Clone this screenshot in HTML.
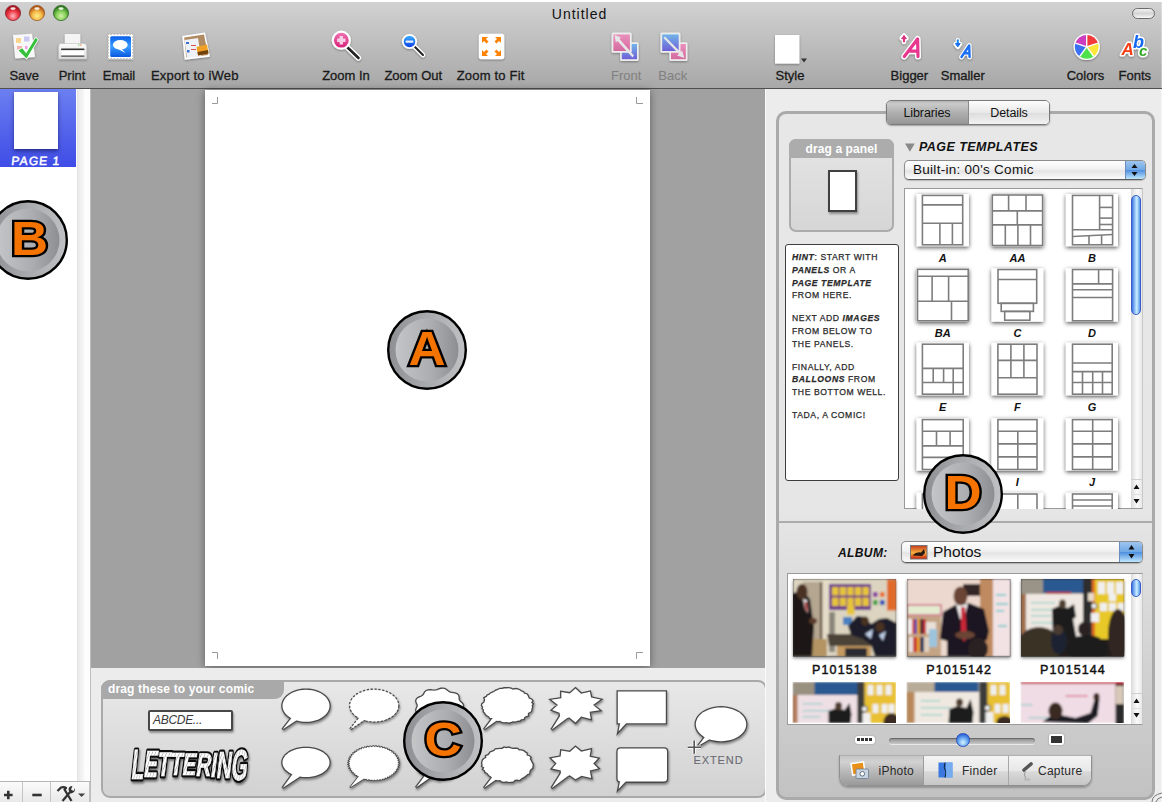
<!DOCTYPE html>
<html><head><meta charset="utf-8">
<style>
*{box-sizing:border-box;margin:0;padding:0}
html,body{width:1162px;height:802px;overflow:hidden;background:#fff;font-family:"Liberation Sans",sans-serif;position:relative}
.a{position:absolute}
.lbl{position:absolute;width:200px;text-align:center;font-size:13px;line-height:15px;color:#1a1a1a;white-space:nowrap;-webkit-text-stroke:0.3px currentColor}
#tb{left:0;top:2px;width:1162px;height:87px;background:linear-gradient(#d2d2d2,#a7a7a7)}
#tbline{left:0;top:88px;width:1162px;height:1px;background:#4f4f4f}
</style></head><body>
<!-- toolbar -->
<div id="tb" class="a"></div>
<div id="tbline" class="a"></div>
<svg class="a" style="left:0;top:0" width="1162" height="89" viewBox="0 0 1162 89">
<defs>
<radialGradient id="gRed" cx="50%" cy="70%" r="60%"><stop offset="0" stop-color="#ffb9c0"/><stop offset=".55" stop-color="#ef3d4a"/><stop offset="1" stop-color="#a8141f"/></radialGradient>
<radialGradient id="gOr" cx="50%" cy="70%" r="60%"><stop offset="0" stop-color="#fdf08a"/><stop offset=".55" stop-color="#f3b545"/><stop offset="1" stop-color="#b0551a"/></radialGradient>
<radialGradient id="gGr" cx="50%" cy="70%" r="60%"><stop offset="0" stop-color="#d5f2a8"/><stop offset=".55" stop-color="#80cc55"/><stop offset="1" stop-color="#2f7a1f"/></radialGradient>
<linearGradient id="gPill" x1="0" y1="0" x2="0" y2="1"><stop offset="0" stop-color="#f4f4f4"/><stop offset=".5" stop-color="#d4d4d4"/><stop offset="1" stop-color="#fafafa"/></linearGradient>
<linearGradient id="gPink" x1="0" y1="0" x2="0" y2="1"><stop offset="0" stop-color="#f070b0"/><stop offset="1" stop-color="#d8207a"/></linearGradient>
<linearGradient id="gBlue" x1="0" y1="0" x2="0" y2="1"><stop offset="0" stop-color="#3cb0ff"/><stop offset="1" stop-color="#0a3ee8"/></linearGradient>
<linearGradient id="gStamp" x1="0" y1="0" x2="0" y2="1"><stop offset="0" stop-color="#0a5ee8"/><stop offset=".5" stop-color="#3a9cff"/><stop offset="1" stop-color="#0a58e0"/></linearGradient>
<linearGradient id="gFP" x1="0" y1="0" x2="0" y2="1"><stop offset="0" stop-color="#ea90bd"/><stop offset="1" stop-color="#d46a9f"/></linearGradient>
<linearGradient id="gFB" x1="0" y1="0" x2="0" y2="1"><stop offset="0" stop-color="#72b4ea"/><stop offset="1" stop-color="#6e5fd6"/></linearGradient>
<linearGradient id="gPrint" x1="0" y1="0" x2="0" y2="1"><stop offset="0" stop-color="#fbfbfb"/><stop offset="1" stop-color="#dcdcdc"/></linearGradient>
<filter id="sh" x="-30%" y="-30%" width="160%" height="160%"><feDropShadow dx="0" dy="1" stdDeviation="0.8" flood-opacity="0.35"/></filter>
</defs>
<!-- traffic lights -->
<circle cx="13" cy="13" r="7.6" fill="url(#gRed)" stroke="#8a2a30" stroke-width="0.8"/>
<ellipse cx="13" cy="8.6" rx="2.6" ry="1.4" fill="#fff" opacity=".85"/>
<circle cx="37" cy="13" r="7.6" fill="url(#gOr)" stroke="#9a5a22" stroke-width="0.8"/>
<ellipse cx="37" cy="8.6" rx="2.6" ry="1.4" fill="#fff" opacity=".85"/>
<circle cx="61" cy="13" r="7.6" fill="url(#gGr)" stroke="#2e6a25" stroke-width="0.8"/>
<ellipse cx="61" cy="8.6" rx="2.6" ry="1.4" fill="#fff" opacity=".85"/>
<!-- pill -->
<rect x="1132.5" y="8.5" width="22" height="10" rx="5" fill="url(#gPill)" stroke="#6a6a6a" stroke-width="1"/>

<!-- Save -->
<g filter="url(#sh)">
<polygon points="13,35 32,33.8 35,57 15.2,58.5" fill="#f8f8f8"/>
<rect x="16" y="38" width="5" height="5" fill="#fcd58c"/>
<rect x="24" y="36.5" width="5.5" height="5" fill="#c9c9f2"/>
<rect x="17" y="46" width="5" height="3.5" fill="#f5b0b0"/>
<rect x="25" y="46" width="2.5" height="3" fill="#f0a0e8"/>
<path d="M18.6,50.6 L22.2,48.3 L26.2,53.2 L35.6,37.8 L37.8,39.7 L26.5,58.5Z" fill="#36c23a" stroke="#fff" stroke-width="1.6" stroke-linejoin="round" paint-order="stroke"/>
</g>
<!-- Print -->
<g filter="url(#sh)">
<rect x="64.8" y="34" width="15.5" height="10" fill="#f4f4f4"/>
<path d="M61,43.5 H84 Q86.8,43.5 86.8,47 V59 H58.6 V47 Q58.6,43.5 61,43.5Z" fill="url(#gPrint)" stroke="#bdbdbd" stroke-width=".6"/>
<rect x="61" y="48.6" width="23.5" height="1.6" rx=".8" fill="#333"/>
<path d="M61.5,50.4 H84 V55.6 H61.5Z" fill="#fff"/>
<rect x="61" y="55.4" width="23.5" height="1.4" rx=".7" fill="#444"/>
<rect x="78" y="44.5" width="1.5" height="1" fill="#6c6"/><rect x="80" y="44.5" width="1.5" height="1" fill="#e74"/>
</g>
<!-- Email stamp -->
<g filter="url(#sh)">
<rect x="108" y="34" width="25.2" height="25.2" fill="#fff"/>
<rect x="110.2" y="36.2" width="20.8" height="20.8" rx="1.5" fill="url(#gStamp)"/>
<ellipse cx="120.3" cy="44.8" rx="7.4" ry="4.8" fill="#fff"/>
<path d="M121,48.5 L125.5,53 L118.5,49.2Z" fill="#fff"/>
</g>
<g fill="#bdbdbd"><circle cx="108.00" cy="34" r="1.1"/><circle cx="108.00" cy="59.2" r="1.1"/><circle cx="108" cy="34.00" r="1.1"/><circle cx="133.2" cy="34.00" r="1.1"/><circle cx="111.15" cy="34" r="1.1"/><circle cx="111.15" cy="59.2" r="1.1"/><circle cx="108" cy="37.15" r="1.1"/><circle cx="133.2" cy="37.15" r="1.1"/><circle cx="114.30" cy="34" r="1.1"/><circle cx="114.30" cy="59.2" r="1.1"/><circle cx="108" cy="40.30" r="1.1"/><circle cx="133.2" cy="40.30" r="1.1"/><circle cx="117.45" cy="34" r="1.1"/><circle cx="117.45" cy="59.2" r="1.1"/><circle cx="108" cy="43.45" r="1.1"/><circle cx="133.2" cy="43.45" r="1.1"/><circle cx="120.60" cy="34" r="1.1"/><circle cx="120.60" cy="59.2" r="1.1"/><circle cx="108" cy="46.60" r="1.1"/><circle cx="133.2" cy="46.60" r="1.1"/><circle cx="123.75" cy="34" r="1.1"/><circle cx="123.75" cy="59.2" r="1.1"/><circle cx="108" cy="49.75" r="1.1"/><circle cx="133.2" cy="49.75" r="1.1"/><circle cx="126.90" cy="34" r="1.1"/><circle cx="126.90" cy="59.2" r="1.1"/><circle cx="108" cy="52.90" r="1.1"/><circle cx="133.2" cy="52.90" r="1.1"/><circle cx="130.05" cy="34" r="1.1"/><circle cx="130.05" cy="59.2" r="1.1"/><circle cx="108" cy="56.05" r="1.1"/><circle cx="133.2" cy="56.05" r="1.1"/><circle cx="133.20" cy="34" r="1.1"/><circle cx="133.20" cy="59.2" r="1.1"/><circle cx="108" cy="59.20" r="1.1"/><circle cx="133.2" cy="59.20" r="1.1"/></g>
<!-- iWeb -->
<g filter="url(#sh)">
<polygon points="182.2,35.9 205,32.5 210,56.7 184.7,59.7" fill="#fff"/>
<polygon points="184.2,37.5 204,34.6 208,55 186.3,57.6" fill="#b08a60"/>
<polygon points="184.5,40 198,38 201,56.5 187,58" fill="#eef2f8"/>
<rect x="186" y="42" width="3" height="2" fill="#3b6fd0"/><rect x="187" y="50" width="2.5" height="2.5" fill="#3b6fd0"/>
<rect x="191" y="45" width="5" height="1" fill="#e05050"/><rect x="191" y="49" width="5" height="1" fill="#e05050"/>
<polygon points="196.5,47 207,44.5 208.5,53.5 198,55.5" fill="#f0a020"/>
<polygon points="197.5,52 208,50 208.5,53.5 198,55.5" fill="#704010"/>
</g>
<!-- Zoom In -->
<g filter="url(#sh)">
<line x1="346" y1="46" x2="358.5" y2="58" stroke="#fff" stroke-width="5.4" stroke-linecap="round"/>
<line x1="346" y1="46" x2="358.5" y2="58" stroke="#222" stroke-width="2.6" stroke-linecap="round"/>
<circle cx="341.3" cy="40.2" r="9.6" fill="#fff"/>
<circle cx="341.3" cy="40.2" r="7.4" fill="url(#gPink)"/>
<path d="M339.6,36 h3.4 v2.5 h2.5 v3.4 h-2.5 v2.5 h-3.4 v-2.5 h-2.5 v-3.4 h2.5z" fill="#f4d0e4"/>
</g>
<!-- Zoom Out -->
<g filter="url(#sh)">
<line x1="414" y1="46" x2="423" y2="55" stroke="#fff" stroke-width="4.6" stroke-linecap="round"/>
<line x1="414" y1="46" x2="423" y2="55" stroke="#222" stroke-width="2" stroke-linecap="round"/>
<circle cx="409.5" cy="41.5" r="7.6" fill="#fff"/>
<circle cx="409.5" cy="41.5" r="5.8" fill="url(#gBlue)"/>
<rect x="405.5" y="40.4" width="8" height="2.3" rx="1" fill="#e8f0ff"/>
</g>
<!-- Zoom to Fit -->
<g filter="url(#sh)">
<rect x="478.8" y="33.7" width="25.5" height="25.5" rx="2.5" fill="#fff"/>
<g fill="#ff8200">
<path d="M482,37 h6 l-2,2 l2.5,2.5 l-2,2 l-2.5,-2.5 l-2,2z"/>
<path d="M501,37 v6 l-2,-2 l-2.5,2.5 l-2,-2 l2.5,-2.5 l-2,-2z"/>
<path d="M482,56 v-6 l2,2 l2.5,-2.5 l2,2 l-2.5,2.5 l2,2z"/>
<path d="M501,56 h-6 l2,-2 l-2.5,-2.5 l2,-2 l2.5,2.5 l2,-2z"/>
</g>
</g>
<!-- Front -->
<g filter="url(#sh)">
<rect x="620.1" y="42.3" width="18.6" height="18.6" rx="1.5" fill="#ececec"/>
<rect x="621.8" y="44" width="15.2" height="15.2" fill="url(#gFB)"/>
<rect x="611.6" y="32.6" width="20.1" height="20.2" rx="1.5" fill="#ececec"/>
<rect x="613.4" y="34.4" width="16.5" height="16.6" fill="url(#gFP)"/>
<path d="M614.5,35 L621,37.5 L619.5,39 L634,55.5 L632.5,57.5 L617.5,41 L615.8,42.5Z" fill="#e6e6e6"/>
</g>
<!-- Back -->
<g filter="url(#sh)">
<rect x="669.3" y="42.3" width="18.2" height="18.6" rx="1.5" fill="#ececec"/>
<rect x="671" y="44" width="14.8" height="15.2" fill="url(#gFP)"/>
<rect x="660.4" y="32.6" width="20.1" height="20.2" rx="1.5" fill="#ececec"/>
<rect x="662.2" y="34.4" width="16.5" height="16.6" fill="url(#gFB)"/>
<path d="M665,36.5 L680.5,52 L682,50.5 L684.5,58 L677,55.5 L679,54 L663.5,38Z" fill="#e6e6e6"/>
</g>
<!-- Style -->
<rect x="775" y="35" width="24.4" height="28.6" fill="#fff" filter="url(#sh)"/>
<path d="M801,58.6 h6 l-3,4z" fill="#333"/>
<!-- Bigger -->
<g filter="url(#sh)" stroke-linecap="round" stroke-linejoin="round" fill="none">
<path d="M904.3,56.5 L917.6,39 L918,56.5 M909,51.2 H917.5" stroke="#fff" stroke-width="6"/>
<path d="M904,42 V36 M901.6,38.2 L904,35.5 L906.4,38.2" stroke="#fff" stroke-width="4.5"/>
<path d="M904.3,56.5 L917.6,39 L918,56.5 M909,51.2 H917.5" stroke="#e8358d" stroke-width="3.2"/>
<path d="M904,41.5 V36.5" stroke="#e0307f" stroke-width="2"/>
<path d="M901.8,38.4 L904,35.6 L906.2,38.4Z" fill="#e0307f" stroke="#e0307f" stroke-width="1"/>
</g>
<!-- Smaller -->
<g filter="url(#sh)" stroke-linecap="round" stroke-linejoin="round" fill="none">
<path d="M961.5,57 L969.2,45.5 L969.6,57 M964.5,53.2 H969.3" stroke="#fff" stroke-width="4.8"/>
<path d="M957.8,40 V46 M955.5,44 L957.8,47 L960.1,44" stroke="#fff" stroke-width="4.2"/>
<path d="M961.5,57 L969.2,45.5 L969.6,57 M964.5,53.2 H969.3" stroke="#1a6ef2" stroke-width="2.4"/>
<path d="M957.8,40.2 V45" stroke="#1a8af2" stroke-width="2"/>
<path d="M955.6,43.8 L957.8,46.8 L960,43.8Z" fill="#1a6ef2" stroke="#1a6ef2" stroke-width="1"/>
</g>
<!-- Colors -->
<g filter="url(#sh)">
<circle cx="1086.7" cy="46.8" r="13.2" fill="#fff"/>
<path d="M1086.7,46.8 L1086.7,34.9 A11.9,11.9 0 0 1 1098,43.1Z" fill="#f43a3a"/>
<path d="M1086.7,46.8 L1098,43.1 A11.9,11.9 0 0 1 1093.7,56.4Z" fill="#fbe63a"/>
<path d="M1086.7,46.8 L1093.7,56.4 A11.9,11.9 0 0 1 1079.7,56.4Z" fill="#4ee24a"/>
<path d="M1086.7,46.8 L1079.7,56.4 A11.9,11.9 0 0 1 1075.4,43.1Z" fill="#3a70f2"/>
<path d="M1086.7,46.8 L1075.4,43.1 A11.9,11.9 0 0 1 1086.7,34.9Z" fill="#cc3cc0"/>
<g stroke="#fff" stroke-width="1.4"><line x1="1086.7" y1="46.8" x2="1086.7" y2="34.9"/><line x1="1086.7" y1="46.8" x2="1098" y2="43.1"/><line x1="1086.7" y1="46.8" x2="1093.7" y2="56.4"/><line x1="1086.7" y1="46.8" x2="1079.7" y2="56.4"/><line x1="1086.7" y1="46.8" x2="1075.4" y2="43.1"/></g>
</g>
<!-- Fonts -->
<g filter="url(#sh)" font-family="Liberation Sans" font-weight="bold" font-style="italic" stroke="#fff" stroke-width="3" paint-order="stroke" stroke-linejoin="round">
<text x="1121.5" y="55" font-size="17" fill="#f53c14">A</text>
<text x="1133" y="48" font-size="18" fill="#1268f0">b</text>
<text x="1139" y="56" font-size="15" fill="#2ea820">c</text>
</g>
</svg>

<div class="lbl" style="left:479.5px;top:7px;font-size:14px;letter-spacing:1px;color:#111;-webkit-text-stroke:0">Untitled</div>
<div class="lbl" style="left:-75.8px;top:67.5px">Save</div>
<div class="lbl" style="left:-28px;top:67.5px">Print</div>
<div class="lbl" style="left:19px;top:67.5px">Email</div>
<div class="lbl" style="left:94.8px;top:67.5px;letter-spacing:0.2px">Export to iWeb</div>
<div class="lbl" style="left:246px;top:67.5px">Zoom In</div>
<div class="lbl" style="left:313.3px;top:67.5px">Zoom Out</div>
<div class="lbl" style="left:390.7px;top:67.5px;letter-spacing:0.2px">Zoom to Fit</div>
<div class="lbl" style="left:526.2px;top:67.5px;color:#808080;-webkit-text-stroke:0">Front</div>
<div class="lbl" style="left:572.7px;top:67.5px;color:#808080;-webkit-text-stroke:0">Back</div>
<div class="lbl" style="left:690px;top:67.5px">Style</div>
<div class="lbl" style="left:809.4px;top:67.5px">Bigger</div>
<div class="lbl" style="left:862.8px;top:67.5px">Smaller</div>
<div class="lbl" style="left:985.5px;top:67.5px">Colors</div>
<div class="lbl" style="left:1034.8px;top:67.5px">Fonts</div>

<!-- left sidebar -->
<div class="a" style="left:0;top:89px;width:77px;height:692px;background:#fff"></div>
<div class="a" style="left:0;top:89px;width:76px;height:78px;background:linear-gradient(#6c7ff1,#3f4ce6)"></div>
<div class="a" style="left:14px;top:92px;width:44px;height:57px;background:#fff;box-shadow:0 2px 4px rgba(0,0,40,.5)"></div>
<div class="a" style="left:77px;top:89px;width:13px;height:692px;background:linear-gradient(90deg,#dedede,#ebebeb 1.5px,#f6f6f6 50%,#fdfdfd 60%,#fdfdfd)"></div>
<div class="a" style="left:90px;top:89px;width:1px;height:713px;background:#bdbdbd"></div>
<div class="a" style="left:0;top:155px;width:72px;text-align:center;font-size:12px;line-height:13px;color:#fff;letter-spacing:1.1px;-webkit-text-stroke:0.5px #fff;transform:skewX(-6deg)">PAGE 1</div>
<!-- bottom left bar -->
<div class="a" style="left:0;top:781px;width:90px;height:21px;background:linear-gradient(#fbfbfb,#e9e9e9);border-top:1px solid #b5b5b5"></div>
<div class="a" style="left:22px;top:782px;width:1px;height:20px;background:#c4c4c4"></div>
<div class="a" style="left:50px;top:782px;width:1px;height:20px;background:#c4c4c4"></div>
<div class="a" style="left:89px;top:782px;width:1px;height:20px;background:#c4c4c4"></div>
<svg class="a" style="left:0;top:781px" width="90" height="21" viewBox="0 781 90 21">
<path d="M4,795 h8.6 M8.3,790.7 v8.6" stroke="#333" stroke-width="2.6"/>
<path d="M32.3,795 h9.4" stroke="#333" stroke-width="2.6"/>
<path d="M57.5,791 L61,787.5 Q64,786.5 66,788 L64.5,789.5 L71.5,801" stroke="#333" stroke-width="2.3" fill="none" stroke-linejoin="round"/>
<path d="M62.5,801 L70.5,791.5" stroke="#333" stroke-width="2.3"/>
<path d="M68.5,790 Q68.5,786 72.5,786 L71,789.5 L73.5,791 L75,788 Q75.5,792.5 71,793.5Z" fill="#333"/>
<path d="M78,793.5 h7.2 l-3.6,3.6z" fill="#444"/>
</svg>

<!-- canvas -->
<div class="a" style="left:91px;top:89px;width:674px;height:579px;background:#a1a1a1"></div>
<div class="a" style="left:205px;top:90px;width:445px;height:576px;background:#fff;box-shadow:0 1px 8px rgba(0,0,0,.42)"></div>
<svg class="a" style="left:205px;top:90px" width="445" height="576" viewBox="205 90 445 576"><g stroke="#9a9a9a" stroke-width="1" fill="none">
<path d="M212,103.5 H217.5 V97"/><path d="M643,103.5 H636.5 V97"/><path d="M643,652.5 H636.5 V659"/><path d="M212,652.5 H217.5 V659"/>
</g></svg>

<!-- bottom well -->
<div class="a" style="left:91px;top:668px;width:674px;height:134px;background:#ececec"></div>
<div class="a" style="left:101px;top:680px;width:666px;height:118px;border:2.5px solid #a9a9a9;border-radius:9px;background:linear-gradient(#e8e8e8,#d2d2d2)"></div>
<div class="a" style="left:101px;top:680px;width:183px;height:19px;background:#a9a9a9;border-radius:9px 0 9px 0"></div>
<div class="a" style="left:108px;top:682px;font-size:12px;line-height:14px;font-weight:bold;color:#fff;letter-spacing:0.15px;white-space:nowrap">drag these to your comic</div>
<div class="a" style="left:148px;top:710px;width:85px;height:21px;background:#fff;border:2px solid #474747;border-radius:2px;box-shadow:1px 2px 2px rgba(0,0,0,.35)"></div>
<div class="a" style="left:153px;top:713px;font-size:12px;line-height:14px;font-style:italic;color:#3a3a3a;letter-spacing:-0.3px;white-space:nowrap">ABCDE...</div>
<svg class="a" style="left:120px;top:740px" width="140" height="50" viewBox="120 740 140 50">
<defs><filter id="lsh" x="-10%" y="-20%" width="130%" height="150%"><feDropShadow dx="1" dy="2" stdDeviation="1.2" flood-opacity=".5"/></filter><pattern id="hatch" patternUnits="userSpaceOnUse" width="5" height="5" patternTransform="rotate(25)"><rect width="5" height="5" fill="#fff"/><rect x="0" y="0" width="1.2" height="5" fill="#b4b4b4"/></pattern></defs>
<g filter="url(#lsh)" font-family="Liberation Sans" font-weight="bold">
<g fill="#111" stroke="#111" stroke-width="5" stroke-linejoin="round"><text transform="translate(130.4,778.7) scale(0.491,1) skewX(-12)" font-size="42.3">L</text><text transform="translate(142.9,777.2) scale(0.550,1) skewX(-12)" font-size="37.7">E</text><text transform="translate(156.6,776.1) scale(0.608,1) skewX(-12)" font-size="34.1">T</text><text transform="translate(169.1,775.4) scale(0.651,1) skewX(-12)" font-size="31.9">T</text><text transform="translate(181.6,775.2) scale(0.664,1) skewX(-12)" font-size="31.2">E</text><text transform="translate(195.2,775.8) scale(0.638,1) skewX(-12)" font-size="32.5">R</text><text transform="translate(210.1,776.6) scale(0.598,1) skewX(-12)" font-size="34.7">I</text><text transform="translate(215.7,777.7) scale(0.550,1) skewX(-12)" font-size="37.7">N</text><text transform="translate(230.5,779.8) scale(0.478,1) skewX(-12)" font-size="43.4">G</text></g>
<g fill="url(#hatch)" stroke="#fff" stroke-width="0.6"><text transform="translate(130.4,778.7) scale(0.491,1) skewX(-12)" font-size="42.3">L</text><text transform="translate(142.9,777.2) scale(0.550,1) skewX(-12)" font-size="37.7">E</text><text transform="translate(156.6,776.1) scale(0.608,1) skewX(-12)" font-size="34.1">T</text><text transform="translate(169.1,775.4) scale(0.651,1) skewX(-12)" font-size="31.9">T</text><text transform="translate(181.6,775.2) scale(0.664,1) skewX(-12)" font-size="31.2">E</text><text transform="translate(195.2,775.8) scale(0.638,1) skewX(-12)" font-size="32.5">R</text><text transform="translate(210.1,776.6) scale(0.598,1) skewX(-12)" font-size="34.7">I</text><text transform="translate(215.7,777.7) scale(0.550,1) skewX(-12)" font-size="37.7">N</text><text transform="translate(230.5,779.8) scale(0.478,1) skewX(-12)" font-size="43.4">G</text></g>

</g>
</svg>
<div class="a" style="left:693.5px;top:753.5px;font-size:11px;line-height:13px;color:#6a6a72;letter-spacing:0.9px;white-space:nowrap;-webkit-text-stroke:0.1px #6a6a72">EXTEND</div>
<svg class="a" style="left:0;top:0" width="1162" height="802" viewBox="0 0 1162 802"><defs><filter id="bsh" x="-20%" y="-20%" width="150%" height="150%"><feDropShadow dx="0.8" dy="1.6" stdDeviation="1" flood-color="#000" flood-opacity="0.45"/></filter></defs>
<g filter="url(#bsh)"><path d="M329.5,705.8 329.3,707.9 328.7,709.9 327.7,711.9 326.4,713.8 324.6,715.5 322.6,717.1 320.3,718.5 317.8,719.7 315.0,720.6 312.1,721.3 309.1,721.7 306.0,721.8 302.9,721.7 299.9,721.3 297.0,720.6 294.2,719.7 291.7,718.5 289.4,717.1 287.4,715.5 285.6,713.8 284.3,711.9 283.3,709.9 282.7,707.9 282.5,705.8 282.7,703.7 283.3,701.7 284.3,699.7 285.6,697.8 287.4,696.1 289.4,694.5 291.7,693.1 294.2,691.9 297.0,691.0 299.9,690.3 302.9,689.9 306.0,689.8 309.1,689.9 312.1,690.3 315.0,691.0 317.8,691.9 320.3,693.1 322.6,694.5 324.6,696.1 326.4,697.8 327.7,699.7 328.7,701.7 329.3,703.7Z" fill="#fff" stroke="#4a4a4a" stroke-width="2.6" /><path d="M293.0,716.0 282.5,729.5 300.0,718.0Z" fill="#fff" stroke="#4a4a4a" stroke-width="2.6" /><path d="M329.5,705.8 329.3,707.9 328.7,709.9 327.7,711.9 326.4,713.8 324.6,715.5 322.6,717.1 320.3,718.5 317.8,719.7 315.0,720.6 312.1,721.3 309.1,721.7 306.0,721.8 302.9,721.7 299.9,721.3 297.0,720.6 294.2,719.7 291.7,718.5 289.4,717.1 287.4,715.5 285.6,713.8 284.3,711.9 283.3,709.9 282.7,707.9 282.5,705.8 282.7,703.7 283.3,701.7 284.3,699.7 285.6,697.8 287.4,696.1 289.4,694.5 291.7,693.1 294.2,691.9 297.0,691.0 299.9,690.3 302.9,689.9 306.0,689.8 309.1,689.9 312.1,690.3 315.0,691.0 317.8,691.9 320.3,693.1 322.6,694.5 324.6,696.1 326.4,697.8 327.7,699.7 328.7,701.7 329.3,703.7Z" fill="#fff"/><path d="M293.0,716.0 282.5,729.5 300.0,718.0Z" fill="#fff"/></g>
<g filter="url(#bsh)"><path d="M398.2,705.6 398.0,707.7 397.4,709.7 396.4,711.6 395.0,713.5 393.2,715.2 391.2,716.8 388.8,718.1 386.2,719.3 383.4,720.2 380.4,720.9 377.3,721.3 374.2,721.4 371.1,721.3 368.0,720.9 365.0,720.2 362.2,719.3 359.6,718.1 357.2,716.8 355.2,715.2 353.4,713.5 352.0,711.6 351.0,709.7 350.4,707.7 350.2,705.6 350.4,703.5 351.0,701.5 352.0,699.6 353.4,697.7 355.2,696.0 357.2,694.4 359.6,693.1 362.2,691.9 365.0,691.0 368.0,690.3 371.1,689.9 374.2,689.8 377.3,689.9 380.4,690.3 383.4,691.0 386.2,691.9 388.8,693.1 391.2,694.4 393.2,696.0 395.0,697.7 396.4,699.6 397.4,701.5 398.0,703.5Z" fill="#fff" stroke="#4a4a4a" stroke-width="2.6" stroke-dasharray="2.2,1.6"/><path d="M361.0,715.5 350.0,729.5 367.0,718.0Z" fill="#fff" stroke="#4a4a4a" stroke-width="2.6" stroke-dasharray="2.2,1.6"/><path d="M398.2,705.6 398.0,707.7 397.4,709.7 396.4,711.6 395.0,713.5 393.2,715.2 391.2,716.8 388.8,718.1 386.2,719.3 383.4,720.2 380.4,720.9 377.3,721.3 374.2,721.4 371.1,721.3 368.0,720.9 365.0,720.2 362.2,719.3 359.6,718.1 357.2,716.8 355.2,715.2 353.4,713.5 352.0,711.6 351.0,709.7 350.4,707.7 350.2,705.6 350.4,703.5 351.0,701.5 352.0,699.6 353.4,697.7 355.2,696.0 357.2,694.4 359.6,693.1 362.2,691.9 365.0,691.0 368.0,690.3 371.1,689.9 374.2,689.8 377.3,689.9 380.4,690.3 383.4,691.0 386.2,691.9 388.8,693.1 391.2,694.4 393.2,696.0 395.0,697.7 396.4,699.6 397.4,701.5 398.0,703.5Z" fill="#fff"/><path d="M361.0,715.5 350.0,729.5 367.0,718.0Z" fill="#fff"/></g>
<g filter="url(#bsh)"><path d="M462.9,705.5 462.5,706.8 461.4,708.0 460.2,709.1 459.2,710.2 458.6,711.3 458.5,712.6 458.5,714.0 458.1,715.4 457.1,716.5 455.6,717.3 453.7,717.7 451.8,718.0 450.1,718.3 448.7,719.0 447.4,719.9 446.1,721.0 444.5,721.9 442.7,722.2 440.8,722.1 439.0,721.5 437.3,720.8 435.7,720.4 434.0,720.3 432.2,720.4 430.2,720.6 428.2,720.5 426.6,719.9 425.3,718.9 424.5,717.6 423.8,716.3 422.9,715.3 421.7,714.4 420.1,713.7 418.4,713.0 417.1,712.0 416.4,710.7 416.4,709.4 417.0,708.0 417.6,706.7 417.9,705.5 417.6,704.3 417.0,703.0 416.4,701.6 416.4,700.3 417.1,699.0 418.4,698.0 420.1,697.3 421.7,696.6 422.9,695.7 423.8,694.7 424.5,693.4 425.3,692.1 426.6,691.1 428.2,690.5 430.2,690.4 432.2,690.6 434.0,690.7 435.7,690.6 437.3,690.2 439.0,689.5 440.8,688.9 442.7,688.8 444.5,689.1 446.1,690.0 447.4,691.1 448.7,692.0 450.1,692.7 451.8,693.0 453.7,693.3 455.6,693.7 457.1,694.5 458.1,695.6 458.5,697.0 458.5,698.4 458.6,699.7 459.2,700.8 460.2,701.9 461.4,703.0 462.5,704.2Z" fill="#fff" stroke="#4a4a4a" stroke-width="2.6" /><path d="M427.0,715.0 416.0,729.5 433.0,717.5Z" fill="#fff" stroke="#4a4a4a" stroke-width="2.6" /><path d="M462.9,705.5 462.5,706.8 461.4,708.0 460.2,709.1 459.2,710.2 458.6,711.3 458.5,712.6 458.5,714.0 458.1,715.4 457.1,716.5 455.6,717.3 453.7,717.7 451.8,718.0 450.1,718.3 448.7,719.0 447.4,719.9 446.1,721.0 444.5,721.9 442.7,722.2 440.8,722.1 439.0,721.5 437.3,720.8 435.7,720.4 434.0,720.3 432.2,720.4 430.2,720.6 428.2,720.5 426.6,719.9 425.3,718.9 424.5,717.6 423.8,716.3 422.9,715.3 421.7,714.4 420.1,713.7 418.4,713.0 417.1,712.0 416.4,710.7 416.4,709.4 417.0,708.0 417.6,706.7 417.9,705.5 417.6,704.3 417.0,703.0 416.4,701.6 416.4,700.3 417.1,699.0 418.4,698.0 420.1,697.3 421.7,696.6 422.9,695.7 423.8,694.7 424.5,693.4 425.3,692.1 426.6,691.1 428.2,690.5 430.2,690.4 432.2,690.6 434.0,690.7 435.7,690.6 437.3,690.2 439.0,689.5 440.8,688.9 442.7,688.8 444.5,689.1 446.1,690.0 447.4,691.1 448.7,692.0 450.1,692.7 451.8,693.0 453.7,693.3 455.6,693.7 457.1,694.5 458.1,695.6 458.5,697.0 458.5,698.4 458.6,699.7 459.2,700.8 460.2,701.9 461.4,703.0 462.5,704.2Z" fill="#fff"/><path d="M427.0,715.0 416.0,729.5 433.0,717.5Z" fill="#fff"/></g>
<g filter="url(#bsh)"><path d="M531.5,705.5 532.1,707.0 531.4,708.4 531.4,710.0 530.8,711.4 528.8,712.4 527.7,713.6 528.0,715.6 525.7,716.2 524.1,717.2 523.6,719.1 521.1,719.3 519.6,720.6 517.2,720.7 515.3,721.5 512.9,721.2 510.9,722.1 508.7,722.6 506.5,722.1 504.2,722.3 502.1,721.9 500.3,720.7 497.7,721.1 495.9,720.2 494.3,719.1 493.0,717.9 490.1,717.9 489.2,716.4 487.4,715.4 485.9,714.3 485.1,712.8 483.8,711.6 484.2,709.9 482.8,708.5 483.3,707.0 482.1,705.5 482.4,704.0 484.4,702.6 484.8,701.2 485.2,699.8 484.6,698.0 486.7,697.0 487.6,695.6 489.5,694.8 490.7,693.5 492.5,692.7 494.3,691.8 495.9,690.8 497.9,690.1 499.8,689.1 502.1,689.1 504.2,688.4 506.5,688.4 508.7,688.2 510.9,688.8 512.9,689.8 515.4,689.2 517.6,689.6 519.6,690.3 521.2,691.6 523.2,692.3 524.1,693.8 526.6,694.3 527.6,695.7 528.2,697.2 528.8,698.6 531.3,699.5 532.3,700.9 530.8,702.6 532.7,704.0Z" fill="#fff" stroke="#4a4a4a" stroke-width="2.6" /><path d="M495.0,715.0 484.0,729.5 501.0,717.5Z" fill="#fff" stroke="#4a4a4a" stroke-width="2.6" /><path d="M531.5,705.5 532.1,707.0 531.4,708.4 531.4,710.0 530.8,711.4 528.8,712.4 527.7,713.6 528.0,715.6 525.7,716.2 524.1,717.2 523.6,719.1 521.1,719.3 519.6,720.6 517.2,720.7 515.3,721.5 512.9,721.2 510.9,722.1 508.7,722.6 506.5,722.1 504.2,722.3 502.1,721.9 500.3,720.7 497.7,721.1 495.9,720.2 494.3,719.1 493.0,717.9 490.1,717.9 489.2,716.4 487.4,715.4 485.9,714.3 485.1,712.8 483.8,711.6 484.2,709.9 482.8,708.5 483.3,707.0 482.1,705.5 482.4,704.0 484.4,702.6 484.8,701.2 485.2,699.8 484.6,698.0 486.7,697.0 487.6,695.6 489.5,694.8 490.7,693.5 492.5,692.7 494.3,691.8 495.9,690.8 497.9,690.1 499.8,689.1 502.1,689.1 504.2,688.4 506.5,688.4 508.7,688.2 510.9,688.8 512.9,689.8 515.4,689.2 517.6,689.6 519.6,690.3 521.2,691.6 523.2,692.3 524.1,693.8 526.6,694.3 527.6,695.7 528.2,697.2 528.8,698.6 531.3,699.5 532.3,700.9 530.8,702.6 532.7,704.0Z" fill="#fff"/><path d="M495.0,715.0 484.0,729.5 501.0,717.5Z" fill="#fff"/></g>
<g filter="url(#bsh)"><path d="M575.5,688.5 581.0,693.8 589.9,691.8 591.1,697.5 600.6,699.6 593.0,705.0 599.7,710.3 589.6,711.8 590.7,718.9 581.1,716.5 575.5,722.6 569.4,717.5 560.7,718.6 559.5,712.8 552.2,710.0 558.0,705.0 551.3,699.8 561.4,698.2 561.3,692.0 569.8,693.4Z" fill="#fff" stroke="#4a4a4a" stroke-width="2.6" /><path d="M562.0,713.0 551.5,729.7 570.0,716.0Z" fill="#fff" stroke="#4a4a4a" stroke-width="2.6" /><path d="M575.5,688.5 581.0,693.8 589.9,691.8 591.1,697.5 600.6,699.6 593.0,705.0 599.7,710.3 589.6,711.8 590.7,718.9 581.1,716.5 575.5,722.6 569.4,717.5 560.7,718.6 559.5,712.8 552.2,710.0 558.0,705.0 551.3,699.8 561.4,698.2 561.3,692.0 569.8,693.4Z" fill="#fff"/><path d="M562.0,713.0 551.5,729.7 570.0,716.0Z" fill="#fff"/></g>
<g filter="url(#bsh)"><path d="M617.8,691.5 H665.8 V723.2 H617.8Z" fill="#fff" stroke="#4a4a4a" stroke-width="2.6" /><path d="M621.0,719.0 618.5,731.6 630.0,719.0Z" fill="#fff" stroke="#4a4a4a" stroke-width="2.6" /><path d="M617.8,691.5 H665.8 V723.2 H617.8Z" fill="#fff"/><path d="M621.0,719.0 618.5,731.6 630.0,719.0Z" fill="#fff"/></g>
<g filter="url(#bsh)"><path d="M329.5,762.5 329.3,764.4 328.7,766.3 327.7,768.0 326.4,769.8 324.6,771.3 322.6,772.8 320.3,774.0 317.8,775.1 315.0,775.9 312.1,776.5 309.1,776.9 306.0,777.0 302.9,776.9 299.9,776.5 297.0,775.9 294.2,775.1 291.7,774.0 289.4,772.8 287.4,771.3 285.6,769.8 284.3,768.0 283.3,766.3 282.7,764.4 282.5,762.5 282.7,760.6 283.3,758.7 284.3,757.0 285.6,755.2 287.4,753.7 289.4,752.2 291.7,751.0 294.2,749.9 297.0,749.1 299.9,748.5 302.9,748.1 306.0,748.0 309.1,748.1 312.1,748.5 315.0,749.1 317.8,749.9 320.3,751.0 322.6,752.2 324.6,753.7 326.4,755.2 327.7,757.0 328.7,758.7 329.3,760.6Z" fill="#fff" stroke="#4a4a4a" stroke-width="2.6" /><path d="M293.0,773.5 282.5,788.0 300.0,776.5Z" fill="#fff" stroke="#4a4a4a" stroke-width="2.6" /><path d="M329.5,762.5 329.3,764.4 328.7,766.3 327.7,768.0 326.4,769.8 324.6,771.3 322.6,772.8 320.3,774.0 317.8,775.1 315.0,775.9 312.1,776.5 309.1,776.9 306.0,777.0 302.9,776.9 299.9,776.5 297.0,775.9 294.2,775.1 291.7,774.0 289.4,772.8 287.4,771.3 285.6,769.8 284.3,768.0 283.3,766.3 282.7,764.4 282.5,762.5 282.7,760.6 283.3,758.7 284.3,757.0 285.6,755.2 287.4,753.7 289.4,752.2 291.7,751.0 294.2,749.9 297.0,749.1 299.9,748.5 302.9,748.1 306.0,748.0 309.1,748.1 312.1,748.5 315.0,749.1 317.8,749.9 320.3,751.0 322.6,752.2 324.6,753.7 326.4,755.2 327.7,757.0 328.7,758.7 329.3,760.6Z" fill="#fff"/><path d="M293.0,773.5 282.5,788.0 300.0,776.5Z" fill="#fff"/></g>
<g filter="url(#bsh)"><path d="M399.0,763.3 397.4,764.2 398.8,765.3 397.1,766.1 398.3,767.2 396.5,767.9 397.5,769.1 395.6,769.6 396.4,770.9 394.4,771.3 395.0,772.6 393.0,772.8 393.3,774.2 391.3,774.2 391.4,775.6 389.3,775.5 389.2,776.9 387.2,776.6 386.8,778.0 384.9,777.6 384.3,778.9 382.4,778.4 381.6,779.7 379.8,778.9 378.8,780.2 377.2,779.3 376.0,780.4 374.5,779.5 373.1,780.5 371.8,779.4 370.2,780.3 369.1,779.1 367.4,779.9 366.5,778.7 364.7,779.3 364.0,778.0 362.0,778.5 361.6,777.1 359.6,777.5 359.3,776.1 357.3,776.3 357.3,774.9 355.2,774.9 355.5,773.5 353.4,773.4 353.9,772.0 351.9,771.8 352.5,770.4 350.6,770.0 351.5,768.7 349.6,768.1 350.7,767.0 349.0,766.2 350.3,765.1 348.6,764.3 350.1,763.3 348.6,762.3 350.3,761.5 349.0,760.4 350.7,759.6 349.6,758.5 351.5,757.9 350.6,756.6 352.5,756.2 351.9,754.8 353.9,754.6 353.4,753.2 355.5,753.1 355.2,751.7 357.3,751.7 357.3,750.3 359.3,750.5 359.6,749.1 361.6,749.5 362.0,748.1 364.0,748.6 364.7,747.3 366.5,747.9 367.4,746.7 369.1,747.5 370.2,746.3 371.8,747.2 373.1,746.1 374.5,747.1 376.0,746.2 377.2,747.3 378.8,746.4 379.8,747.7 381.6,746.9 382.4,748.2 384.3,747.7 384.9,749.0 386.8,748.6 387.2,750.0 389.2,749.7 389.3,751.1 391.4,751.0 391.3,752.4 393.3,752.4 393.0,753.8 395.0,754.0 394.4,755.3 396.4,755.7 395.6,757.0 397.5,757.5 396.5,758.7 398.3,759.4 397.1,760.5 398.8,761.3 397.4,762.4Z" fill="#fff" stroke="#4a4a4a" stroke-width="1.8" /><path d="M361.0,773.5 350.0,787.6 368.0,776.0Z" fill="#fff" stroke="#4a4a4a" stroke-width="1.8" /><path d="M399.0,763.3 397.4,764.2 398.8,765.3 397.1,766.1 398.3,767.2 396.5,767.9 397.5,769.1 395.6,769.6 396.4,770.9 394.4,771.3 395.0,772.6 393.0,772.8 393.3,774.2 391.3,774.2 391.4,775.6 389.3,775.5 389.2,776.9 387.2,776.6 386.8,778.0 384.9,777.6 384.3,778.9 382.4,778.4 381.6,779.7 379.8,778.9 378.8,780.2 377.2,779.3 376.0,780.4 374.5,779.5 373.1,780.5 371.8,779.4 370.2,780.3 369.1,779.1 367.4,779.9 366.5,778.7 364.7,779.3 364.0,778.0 362.0,778.5 361.6,777.1 359.6,777.5 359.3,776.1 357.3,776.3 357.3,774.9 355.2,774.9 355.5,773.5 353.4,773.4 353.9,772.0 351.9,771.8 352.5,770.4 350.6,770.0 351.5,768.7 349.6,768.1 350.7,767.0 349.0,766.2 350.3,765.1 348.6,764.3 350.1,763.3 348.6,762.3 350.3,761.5 349.0,760.4 350.7,759.6 349.6,758.5 351.5,757.9 350.6,756.6 352.5,756.2 351.9,754.8 353.9,754.6 353.4,753.2 355.5,753.1 355.2,751.7 357.3,751.7 357.3,750.3 359.3,750.5 359.6,749.1 361.6,749.5 362.0,748.1 364.0,748.6 364.7,747.3 366.5,747.9 367.4,746.7 369.1,747.5 370.2,746.3 371.8,747.2 373.1,746.1 374.5,747.1 376.0,746.2 377.2,747.3 378.8,746.4 379.8,747.7 381.6,746.9 382.4,748.2 384.3,747.7 384.9,749.0 386.8,748.6 387.2,750.0 389.2,749.7 389.3,751.1 391.4,751.0 391.3,752.4 393.3,752.4 393.0,753.8 395.0,754.0 394.4,755.3 396.4,755.7 395.6,757.0 397.5,757.5 396.5,758.7 398.3,759.4 397.1,760.5 398.8,761.3 397.4,762.4Z" fill="#fff"/><path d="M361.0,773.5 350.0,787.6 368.0,776.0Z" fill="#fff"/></g>
<g filter="url(#bsh)"><path d="M461.7,763.0 460.7,764.2 460.2,765.4 461.7,766.9 460.0,767.9 460.7,769.4 459.8,770.6 457.9,771.3 457.1,772.4 456.1,773.4 455.1,774.5 453.8,775.3 452.3,776.0 450.9,776.8 449.7,777.9 447.6,777.8 445.9,778.1 444.4,778.9 442.4,778.4 440.7,778.6 439.0,779.8 437.2,779.0 435.5,778.9 434.0,777.8 432.1,778.1 430.3,777.9 429.3,776.6 427.1,776.8 425.6,776.1 425.0,774.6 422.9,774.5 421.9,773.4 420.5,772.6 420.1,771.2 418.5,770.4 417.7,769.3 418.6,767.7 418.1,766.6 416.4,765.5 415.5,764.3 417.1,763.0 416.7,761.8 416.6,760.5 417.5,759.3 417.9,758.1 418.6,757.0 419.2,755.8 419.6,754.6 421.2,753.8 422.1,752.7 422.7,751.4 425.1,751.4 425.7,750.0 427.0,749.0 429.0,749.0 430.6,748.6 431.8,747.3 433.9,747.8 435.6,747.7 437.2,747.2 439.0,746.7 440.7,747.7 442.5,747.5 444.2,747.7 446.2,747.3 447.6,748.3 449.6,748.2 450.4,749.8 452.0,750.3 453.8,750.7 455.5,751.3 456.0,752.7 456.7,753.9 457.5,755.0 459.1,755.7 459.1,757.1 461.1,757.9 461.6,759.1 460.5,760.6 460.9,761.8Z" fill="#fff" stroke="#4a4a4a" stroke-width="2.6" /><path d="M427.0,773.0 416.0,787.6 433.0,775.5Z" fill="#fff" stroke="#4a4a4a" stroke-width="2.6" /><path d="M461.7,763.0 460.7,764.2 460.2,765.4 461.7,766.9 460.0,767.9 460.7,769.4 459.8,770.6 457.9,771.3 457.1,772.4 456.1,773.4 455.1,774.5 453.8,775.3 452.3,776.0 450.9,776.8 449.7,777.9 447.6,777.8 445.9,778.1 444.4,778.9 442.4,778.4 440.7,778.6 439.0,779.8 437.2,779.0 435.5,778.9 434.0,777.8 432.1,778.1 430.3,777.9 429.3,776.6 427.1,776.8 425.6,776.1 425.0,774.6 422.9,774.5 421.9,773.4 420.5,772.6 420.1,771.2 418.5,770.4 417.7,769.3 418.6,767.7 418.1,766.6 416.4,765.5 415.5,764.3 417.1,763.0 416.7,761.8 416.6,760.5 417.5,759.3 417.9,758.1 418.6,757.0 419.2,755.8 419.6,754.6 421.2,753.8 422.1,752.7 422.7,751.4 425.1,751.4 425.7,750.0 427.0,749.0 429.0,749.0 430.6,748.6 431.8,747.3 433.9,747.8 435.6,747.7 437.2,747.2 439.0,746.7 440.7,747.7 442.5,747.5 444.2,747.7 446.2,747.3 447.6,748.3 449.6,748.2 450.4,749.8 452.0,750.3 453.8,750.7 455.5,751.3 456.0,752.7 456.7,753.9 457.5,755.0 459.1,755.7 459.1,757.1 461.1,757.9 461.6,759.1 460.5,760.6 460.9,761.8Z" fill="#fff"/><path d="M427.0,773.0 416.0,787.6 433.0,775.5Z" fill="#fff"/></g>
<g filter="url(#bsh)"><path d="M532.8,764.7 532.3,766.2 532.4,767.7 530.9,769.1 529.8,770.3 529.3,771.8 529.2,773.4 527.0,774.3 525.8,775.5 524.4,776.6 522.8,777.6 521.0,778.4 519.6,779.9 516.9,779.5 514.8,779.8 513.3,781.5 511.0,781.7 508.7,782.0 506.5,781.2 504.2,781.8 501.9,781.5 500.2,780.1 497.8,780.3 495.6,779.8 493.9,778.8 492.3,777.7 491.0,776.5 489.4,775.5 488.3,774.2 487.4,772.9 485.4,772.0 485.1,770.4 483.3,769.2 484.5,767.5 482.3,766.2 482.7,764.7 482.3,763.2 482.6,761.6 483.1,760.1 484.5,758.8 486.5,757.8 486.1,756.0 488.4,755.2 489.5,754.0 490.4,752.5 492.3,751.7 494.2,751.0 495.5,749.5 497.9,749.3 500.1,749.1 502.3,748.9 504.2,747.7 506.5,748.2 508.7,747.7 510.8,748.5 512.9,749.0 515.2,748.9 517.5,749.0 518.9,750.5 521.5,750.5 523.5,751.2 525.0,752.4 526.6,753.5 526.5,755.4 528.9,756.1 530.4,757.3 529.6,759.1 530.7,760.4 531.2,761.8 532.1,763.2Z" fill="#fff" stroke="#4a4a4a" stroke-width="2.6" /><path d="M495.0,773.5 484.0,788.0 501.0,776.0Z" fill="#fff" stroke="#4a4a4a" stroke-width="2.6" /><path d="M532.8,764.7 532.3,766.2 532.4,767.7 530.9,769.1 529.8,770.3 529.3,771.8 529.2,773.4 527.0,774.3 525.8,775.5 524.4,776.6 522.8,777.6 521.0,778.4 519.6,779.9 516.9,779.5 514.8,779.8 513.3,781.5 511.0,781.7 508.7,782.0 506.5,781.2 504.2,781.8 501.9,781.5 500.2,780.1 497.8,780.3 495.6,779.8 493.9,778.8 492.3,777.7 491.0,776.5 489.4,775.5 488.3,774.2 487.4,772.9 485.4,772.0 485.1,770.4 483.3,769.2 484.5,767.5 482.3,766.2 482.7,764.7 482.3,763.2 482.6,761.6 483.1,760.1 484.5,758.8 486.5,757.8 486.1,756.0 488.4,755.2 489.5,754.0 490.4,752.5 492.3,751.7 494.2,751.0 495.5,749.5 497.9,749.3 500.1,749.1 502.3,748.9 504.2,747.7 506.5,748.2 508.7,747.7 510.8,748.5 512.9,749.0 515.2,748.9 517.5,749.0 518.9,750.5 521.5,750.5 523.5,751.2 525.0,752.4 526.6,753.5 526.5,755.4 528.9,756.1 530.4,757.3 529.6,759.1 530.7,760.4 531.2,761.8 532.1,763.2Z" fill="#fff"/><path d="M495.0,773.5 484.0,788.0 501.0,776.0Z" fill="#fff"/></g>
<g filter="url(#bsh)"><path d="M575.5,746.9 581.2,751.8 590.8,749.5 589.5,756.7 598.0,758.6 593.2,763.5 598.2,768.4 589.7,770.4 591.2,777.9 581.5,775.8 575.5,779.3 569.8,775.3 561.1,776.7 560.8,770.6 552.1,768.6 556.6,763.5 551.3,758.3 560.7,756.4 561.3,750.5 569.9,752.0Z" fill="#fff" stroke="#4a4a4a" stroke-width="2.6" /><path d="M562.0,771.5 551.5,788.2 570.0,774.5Z" fill="#fff" stroke="#4a4a4a" stroke-width="2.6" /><path d="M575.5,746.9 581.2,751.8 590.8,749.5 589.5,756.7 598.0,758.6 593.2,763.5 598.2,768.4 589.7,770.4 591.2,777.9 581.5,775.8 575.5,779.3 569.8,775.3 561.1,776.7 560.8,770.6 552.1,768.6 556.6,763.5 551.3,758.3 560.7,756.4 561.3,750.5 569.9,752.0Z" fill="#fff"/><path d="M562.0,771.5 551.5,788.2 570.0,774.5Z" fill="#fff"/></g>
<g filter="url(#bsh)"><path d="M620.5,748.6 H664 Q667,748.6 667,751.6 V778.6 Q667,781.6 664,781.6 H620.5 Q617.6,781.6 617.6,778.6 V751.6 Q617.6,748.6 620.5,748.6Z" fill="#fff" stroke="#4a4a4a" stroke-width="2.6" /><path d="M621.0,777.0 618.5,789.0 630.0,777.0Z" fill="#fff" stroke="#4a4a4a" stroke-width="2.6" /><path d="M620.5,748.6 H664 Q667,748.6 667,751.6 V778.6 Q667,781.6 664,781.6 H620.5 Q617.6,781.6 617.6,778.6 V751.6 Q617.6,748.6 620.5,748.6Z" fill="#fff"/><path d="M621.0,777.0 618.5,789.0 630.0,777.0Z" fill="#fff"/></g>
<g filter="url(#bsh)"><path d="M746.2,724.3 746.0,726.5 745.3,728.7 744.3,730.8 742.8,732.8 741.0,734.6 738.8,736.3 736.3,737.7 733.6,738.9 730.6,739.9 727.5,740.6 724.3,741.1 721.0,741.2 717.7,741.1 714.5,740.6 711.4,739.9 708.4,738.9 705.7,737.7 703.2,736.3 701.0,734.6 699.2,732.8 697.7,730.8 696.7,728.7 696.0,726.5 695.8,724.3 696.0,722.1 696.7,719.9 697.7,717.8 699.2,715.8 701.0,714.0 703.2,712.3 705.7,710.9 708.4,709.7 711.4,708.7 714.5,708.0 717.7,707.5 721.0,707.4 724.3,707.5 727.5,708.0 730.6,708.7 733.6,709.7 736.3,710.9 738.8,712.3 741.0,714.0 742.8,715.8 744.3,717.8 745.3,719.9 746.0,722.1Z" fill="#fff" stroke="#4a4a4a" stroke-width="2.6" /><path d="M708.0,733.0 698.0,746.0 715.0,736.0Z" fill="#fff" stroke="#4a4a4a" stroke-width="2.6" /><path d="M746.2,724.3 746.0,726.5 745.3,728.7 744.3,730.8 742.8,732.8 741.0,734.6 738.8,736.3 736.3,737.7 733.6,738.9 730.6,739.9 727.5,740.6 724.3,741.1 721.0,741.2 717.7,741.1 714.5,740.6 711.4,739.9 708.4,738.9 705.7,737.7 703.2,736.3 701.0,734.6 699.2,732.8 697.7,730.8 696.7,728.7 696.0,726.5 695.8,724.3 696.0,722.1 696.7,719.9 697.7,717.8 699.2,715.8 701.0,714.0 703.2,712.3 705.7,710.9 708.4,709.7 711.4,708.7 714.5,708.0 717.7,707.5 721.0,707.4 724.3,707.5 727.5,708.0 730.6,708.7 733.6,709.7 736.3,710.9 738.8,712.3 741.0,714.0 742.8,715.8 744.3,717.8 745.3,719.9 746.0,722.1Z" fill="#fff"/><path d="M708.0,733.0 698.0,746.0 715.0,736.0Z" fill="#fff"/></g>
<path d="M687.7,747.2 H701 M694.2,740.5 V753.8" stroke="#fff" stroke-width="3.6" opacity=".8"/><path d="M687.7,747.2 H701 M694.2,740.5 V753.8" stroke="#555" stroke-width="1.6"/>
</svg>

<!-- right panel -->
<div class="a" style="left:765px;top:89px;width:397px;height:713px;background:#ececec;border-left:1px solid #fafafa"></div>
<div class="a" style="left:776px;top:111px;width:379px;height:689px;border:3px solid #aaa;border-radius:10px;background:linear-gradient(#e7e7e7,#e6e6e6 58%,#e4e4e4 60%,#c2c2c2)"></div>
<!-- RIGHT PANEL -->
<div class="a" style="left:776px;top:521px;width:379px;height:2px;background:#acacac"></div>
<!-- tabs -->
<div class="a" style="left:886px;top:100px;width:164px;height:25px;border-radius:5px;border:1px solid #7a7a7a;box-shadow:0 1px 1.5px rgba(0,0,0,.3);overflow:hidden">
 <div class="a" style="left:0;top:0;width:81px;height:23px;background:linear-gradient(#b4b4b4,#cacaca 12%,#b0b0b0 50%,#969696)"></div>
 <div class="a" style="left:81px;top:0;width:1px;height:23px;background:#8a8a8a"></div>
 <div class="a" style="left:82px;top:0;width:81px;height:23px;background:linear-gradient(#fdfdfd,#e9e9e9 50%,#dcdcdc 51%,#f2f2f2)"></div>
</div>
<div class="a" style="left:886px;top:105.5px;width:82px;text-align:center;font-size:12.5px;line-height:15px;color:#111;letter-spacing:-0.1px">Libraries</div>
<div class="a" style="left:968px;top:105.5px;width:82px;text-align:center;font-size:12.5px;line-height:15px;color:#111;letter-spacing:-0.1px">Details</div>
<!-- drag a panel -->
<div class="a" style="left:789px;top:139px;width:105px;height:93px;border:2.5px solid #acacac;border-radius:7px;background:linear-gradient(#e4e4e4,#d6d6d6)"></div>
<div class="a" style="left:789px;top:139px;width:105px;height:19px;background:#acacac;border-radius:7px 7px 0 0"></div>
<div class="a" style="left:789px;top:142px;width:105px;text-align:center;font-size:12px;line-height:14px;font-weight:bold;color:#fff;letter-spacing:0.1px">drag a panel</div>
<div class="a" style="left:828px;top:170px;width:29px;height:42px;background:#fff;border:2px solid #404040;box-shadow:1px 2px 2px rgba(0,0,0,.35)"></div>
<!-- page templates title -->
<svg class="a" style="left:904px;top:142px" width="12" height="12" viewBox="904 142 12 12"><path d="M905,143.6 H914.8 L909.9,151.7Z" fill="#8a8a8a"/></svg>
<div class="a" style="left:919px;top:140px;font-size:12.5px;line-height:15px;font-weight:bold;font-style:italic;color:#111;letter-spacing:0.45px;white-space:nowrap">PAGE TEMPLATES</div>
<!-- dropdown -->
<div class="a" style="left:904px;top:160px;width:241.5px;height:20px;border-radius:5px;border:1px solid #8c8c8c;border-bottom-color:#5a5a5a;background:linear-gradient(#fefefe,#f1f1f1 45%,#e4e4e4 55%,#fbfbfb);box-shadow:0 1px 1px rgba(0,0,0,.2);overflow:hidden">
 <div class="a" style="right:0;top:0;width:20px;height:18px;background:linear-gradient(#9ec4ee,#6ea8e6 50%,#4f90e0 52%,#bfe6fc);border-left:1px solid #6c8cc0"></div>
</div>
<svg class="a" style="left:1125px;top:160px" width="21" height="20" viewBox="1125 160 21 20"><path d="M1131.5,168 h6 l-3,-4z M1131.5,172 h6 l-3,4z" fill="#111"/></svg>
<div class="a" style="left:913px;top:161.5px;font-size:13.5px;line-height:15px;color:#111;letter-spacing:0.28px;white-space:nowrap">Built-in: 00's Comic</div>
<!-- template list -->
<div class="a" style="left:904px;top:188px;width:239px;height:321px;background:#fff;border:1px solid #9a9a9a;border-right-color:#c8c8c8"></div>
<div class="a" style="left:1130.5px;top:189px;width:11.5px;height:319px;background:linear-gradient(90deg,#e0e0e0,#fbfbfb 50%,#e8e8e8);border-left:1px solid #dcdcdc"></div>
<div class="a" style="left:1130.5px;top:195px;width:10.5px;height:120px;border-radius:5.5px;border:1px solid #3e5cc8;background:linear-gradient(90deg,#3d74e0,#a8d2ff 45%,#c8f0ff 60%,#5894ea)"></div>
<div class="a" style="left:1131px;top:479px;width:11px;height:1px;background:#cfcfcf"></div>
<div class="a" style="left:1131px;top:494px;width:11px;height:1px;background:#dedede"></div>
<svg class="a" style="left:1130px;top:479px" width="13" height="30" viewBox="1130 479 13 30"><path d="M1133.5,489 h6 l-3,-4.5z M1133.5,499 h6 l-3,4.5z" fill="#111"/></svg>
<svg class="a" style="left:905px;top:189px" width="225" height="320" viewBox="905 189 225 320"><defs><filter id="tsh" x="-20%" y="-20%" width="140%" height="150%"><feDropShadow dx="0" dy="1.5" stdDeviation="2" flood-opacity="0.7"/></filter></defs>
<rect x="916.6" y="194.0" width="52.3" height="52.2" fill="#fff" filter="url(#tsh)"/>
<rect x="991.5" y="194.0" width="51.8" height="52.2" fill="#fff" filter="url(#tsh)"/>
<rect x="1065.9" y="194.0" width="52.1" height="52.2" fill="#fff" filter="url(#tsh)"/>
<rect x="916.6" y="268.4" width="52.3" height="53.3" fill="#fff" filter="url(#tsh)"/>
<rect x="991.5" y="268.4" width="51.8" height="53.3" fill="#fff" filter="url(#tsh)"/>
<rect x="1065.9" y="268.4" width="52.1" height="53.3" fill="#fff" filter="url(#tsh)"/>
<rect x="916.6" y="342.8" width="52.3" height="52.5" fill="#fff" filter="url(#tsh)"/>
<rect x="991.5" y="342.8" width="51.8" height="52.5" fill="#fff" filter="url(#tsh)"/>
<rect x="1065.9" y="342.8" width="52.1" height="52.5" fill="#fff" filter="url(#tsh)"/>
<rect x="916.6" y="418.3" width="52.3" height="52.3" fill="#fff" filter="url(#tsh)"/>
<rect x="991.5" y="418.3" width="51.8" height="52.3" fill="#fff" filter="url(#tsh)"/>
<rect x="1065.9" y="418.3" width="52.1" height="52.3" fill="#fff" filter="url(#tsh)"/>
<rect x="916.6" y="492.8" width="52.3" height="52.2" fill="#fff" filter="url(#tsh)"/>
<rect x="991.5" y="492.8" width="51.8" height="52.2" fill="#fff" filter="url(#tsh)"/>
<rect x="1065.9" y="492.8" width="52.1" height="52.2" fill="#fff" filter="url(#tsh)"/>
<g fill="none" stroke="#7d7d7d" stroke-width="1.6"><rect x="922.4" y="195.4" width="40.3" height="49.4"/><path d="M922.4,204.9 L962.7,204.9"/><path d="M922.4,223.3 L962.7,223.3"/><path d="M939.9,223.3 L939.9,244.8"/><path d="M952.4,223.3 L952.4,244.8"/><rect x="992.3" y="195.0" width="50.3" height="50.5"/><path d="M992.3,210.9 L1042.6,210.9"/><path d="M992.3,224.9 L1042.6,224.9"/><path d="M1008.6,195.0 L1008.6,210.9"/><path d="M1026.0,195.0 L1026.0,210.9"/><path d="M1017.3,210.9 L1017.3,224.9"/><path d="M1005.3,224.9 L1005.3,245.5"/><path d="M1017.9,224.9 L1017.9,245.5"/><path d="M1030.5,224.9 L1030.5,245.5"/><rect x="1072.5" y="195.4" width="40.1" height="49.4"/><path d="M1099.6,195.4 L1099.6,229.7"/><path d="M1099.6,207.4 L1112.6,207.4"/><path d="M1099.6,218.1 L1112.6,218.1"/><path d="M1099.6,224.5 L1112.6,224.5"/><path d="M1072.5,229.7 L1112.6,229.7"/><path d="M1072.5,236.5 L1112.6,234.5"/><path d="M1089.0,236.0 L1089.0,244.8"/><path d="M1101.6,235.0 L1101.6,244.8"/><rect x="917.5" y="269.3" width="50.7" height="51.5"/><path d="M917.5,276.2 L968.2,276.2"/><path d="M917.5,301.3 L968.2,301.3"/><path d="M932.1,276.2 L932.1,301.3"/><path d="M948.6,276.2 L948.6,301.3"/><path d="M951.5,301.3 L951.5,320.8"/><rect x="998.0" y="269.5" width="38.7" height="33.8"/><path d="M998.0,279.5 L1036.7,279.5"/><rect x="1001.2" y="303.3" width="32.2" height="8.1"/><rect x="1004.7" y="311.4" width="25.2" height="8.8"/><rect x="1072.5" y="269.5" width="40.1" height="51.3"/><path d="M1098.6,269.5 L1098.6,283.9"/><path d="M1072.5,283.9 L1112.6,283.9"/><path d="M1072.5,289.7 L1112.6,289.7"/><path d="M1072.5,297.5 L1112.6,297.5"/><rect x="922.4" y="344.2" width="40.8" height="50.0"/><path d="M922.4,368.4 L963.2,368.4"/><path d="M922.4,382.5 L963.2,382.5"/><path d="M933.2,368.4 L933.2,382.5"/><path d="M943.6,368.4 L943.6,382.5"/><path d="M953.2,368.4 L953.2,394.2"/><rect x="997.9" y="344.2" width="39.1" height="50.0"/><path d="M997.9,360.4 L1037.0,360.4"/><path d="M997.9,377.7 L1037.0,377.7"/><path d="M1010.9,344.2 L1010.9,377.7"/><path d="M1023.9,344.2 L1023.9,377.7"/><rect x="1072.5" y="344.2" width="39.7" height="50.0"/><path d="M1072.5,363.0 L1112.2,363.0"/><path d="M1072.5,371.6 L1112.2,371.6"/><path d="M1072.5,382.5 L1112.2,382.5"/><path d="M1082.5,371.6 L1082.5,394.2"/><path d="M1092.7,371.6 L1092.7,394.2"/><path d="M1102.5,371.6 L1102.5,394.2"/><rect x="922.4" y="419.6" width="40.8" height="49.9"/><path d="M922.4,431.3 L963.2,431.3"/><path d="M922.4,445.9 L963.2,445.9"/><path d="M922.4,457.4 L963.2,457.4"/><path d="M936.5,431.3 L936.5,445.9"/><path d="M950.1,431.3 L950.1,445.9"/><rect x="997.9" y="419.6" width="39.1" height="49.9"/><path d="M997.9,431.3 L1037.0,431.3"/><path d="M997.9,443.9 L1037.0,443.9"/><path d="M997.9,456.9 L1037.0,456.9"/><path d="M1017.8,431.3 L1017.8,469.5"/><rect x="1072.5" y="419.6" width="39.7" height="49.9"/><path d="M1072.5,431.3 L1112.2,431.3"/><path d="M1072.5,443.9 L1112.2,443.9"/><path d="M1072.5,456.9 L1112.2,456.9"/><path d="M1092.7,419.6 L1092.7,469.5"/><rect x="922.4" y="494.0" width="40.8" height="51.0"/><rect x="997.9" y="494.0" width="39.1" height="51.0"/><path d="M1017.8,494.0 L1017.8,545.0"/><rect x="1072.5" y="494.0" width="39.7" height="51.0"/><path d="M1072.5,500.0 L1112.2,500.0"/><path d="M1072.5,506.0 L1112.2,506.0"/></g>
<g font-family="Liberation Sans" font-weight="bold" font-style="italic" font-size="11" fill="#111" text-anchor="middle"><text x="942.7" y="262">A</text><text x="1017.4" y="262">AA</text><text x="1092" y="262">B</text><text x="942.7" y="336.5">BA</text><text x="1017.4" y="336.5">C</text><text x="1092" y="336.5">D</text><text x="942.7" y="411">E</text><text x="1017.4" y="411">F</text><text x="1092" y="411">G</text><text x="942.7" y="485.5">H</text><text x="1017.4" y="485.5">I</text><text x="1092" y="485.5">J</text></g>
</svg>
<!-- hint box -->
<div class="a" style="left:785px;top:244px;width:114px;height:237px;background:#fff;border:1.5px solid #3e3e3e;border-radius:3px"></div>
<div class="a" style="left:792px;top:251px;font-size:8.6px;line-height:12.8px;color:#2a2a2a;white-space:nowrap;letter-spacing:0.6px;-webkit-text-stroke:0.25px #2a2a2a">
<b><i>HINT</i></b>: START WITH<br><b><i>PANELS</i></b> OR A<br><b><i>PAGE TEMPLATE</i></b><br>FROM HERE.<br><div style="height:10px"></div>NEXT ADD <b><i>IMAGES</i></b><br>FROM BELOW TO<br>THE PANELS.<br><div style="height:10px"></div>FINALLY, ADD<br><b><i>BALLOONS</i></b> FROM<br>THE BOTTOM WELL.<br><div style="height:10px"></div>TADA, A COMIC!</div>
<!-- album -->
<div class="a" style="left:838px;top:546px;font-size:12px;line-height:14px;font-weight:bold;font-style:italic;color:#111;letter-spacing:0.4px;white-space:nowrap">ALBUM:</div>
<div class="a" style="left:900.5px;top:541px;width:242.5px;height:22px;border-radius:5px;border:1px solid #8c8c8c;border-bottom-color:#5a5a5a;background:linear-gradient(#fefefe,#f1f1f1 45%,#e4e4e4 55%,#fbfbfb);box-shadow:0 1px 1px rgba(0,0,0,.2);overflow:hidden">
 <div class="a" style="right:0;top:0;width:23px;height:20px;background:linear-gradient(#9ec4ee,#6ea8e6 50%,#4f90e0 52%,#bfe6fc);border-left:1px solid #6c8cc0"></div>
</div>
<svg class="a" style="left:1120px;top:541px" width="23" height="22" viewBox="1120 541 23 22"><path d="M1128.5,549.5 h6 l-3,-4.5z M1128.5,554 h6 l-3,4.5z" fill="#111"/></svg>
<svg class="a" style="left:909px;top:544px" width="20" height="17" viewBox="909 544 20 17">
<defs><linearGradient id="ipg" x1="0" y1="0" x2="0" y2="1"><stop offset="0" stop-color="#c84020"/><stop offset=".55" stop-color="#f8b040"/><stop offset="1" stop-color="#d02810"/></linearGradient></defs>
<rect x="910" y="545" width="17.5" height="14.5" fill="#777"/><rect x="911" y="546" width="15.5" height="12.5" fill="url(#ipg)"/><path d="M912.5,555.5 Q916,551.5 921,552.5 L924,549 L925,553 L922,556Z" fill="#2a1a10"/></svg>
<div class="a" style="left:933px;top:542.5px;font-size:15.5px;line-height:17px;color:#111;white-space:nowrap">Photos</div>
<!-- photo list -->
<div class="a" style="left:787px;top:572.5px;width:356px;height:152px;background:#fff;border:1px solid #9a9a9a;border-right-color:#c8c8c8"></div>
<div class="a" style="left:1131px;top:573.5px;width:11px;height:150px;background:linear-gradient(90deg,#e0e0e0,#fbfbfb 50%,#e8e8e8);border-left:1px solid #dcdcdc"></div>
<div class="a" style="left:1131px;top:578.5px;width:10px;height:18px;border-radius:5px;border:1px solid #3e5cc8;background:linear-gradient(90deg,#3d74e0,#a8d2ff 45%,#c8f0ff 60%,#5894ea)"></div>
<div class="a" style="left:1131px;top:693px;width:11px;height:1px;background:#cfcfcf"></div>
<div class="a" style="left:1131px;top:708px;width:11px;height:1px;background:#dedede"></div>
<svg class="a" style="left:1130px;top:693px" width="13" height="32" viewBox="1130 693 13 32"><path d="M1133.5,703 h6 l-3,-4.5z M1133.5,713 h6 l-3,4.5z" fill="#111"/></svg>
<svg class="a" style="left:788px;top:574px" width="342" height="150" viewBox="788 574 342 150">
<defs>
<filter id="pb" x="-5%" y="-5%" width="110%" height="110%"><feGaussianBlur stdDeviation="1"/></filter>
<filter id="psh" x="-10%" y="-10%" width="120%" height="125%"><feDropShadow dx="0" dy="1.5" stdDeviation="1.5" flood-opacity=".5"/></filter>
<clipPath id="c1"><rect x="0" y="0" width="103.5" height="77.6"/></clipPath>
<clipPath id="c2"><rect x="0" y="0" width="103.5" height="41"/></clipPath>
</defs>
<rect x="793" y="579" width="103" height="77.6" fill="#333" filter="url(#psh)"/>
<rect x="907" y="579" width="103.5" height="77.6" fill="#333" filter="url(#psh)"/>
<rect x="1021" y="579" width="103" height="77.6" fill="#333" filter="url(#psh)"/>
<!-- photo 1 -->
<g transform="translate(793,579)" clip-path="url(#c1)"><g filter="url(#pb)">
<rect width="103.5" height="77.6" fill="#dcd4c0"/>
<rect x="10" y="3" width="19" height="57" fill="#b4a690"/><rect x="27" y="3" width="2.5" height="70" fill="#5a4a3a"/>
<rect x="29.5" y="0" width="7" height="77.6" fill="#e4dcc8"/>
<rect x="36" y="5" width="42" height="26" fill="#6e3d8c"/>
<g fill="#e6c43a"><rect x="39" y="8" width="6.5" height="8.5"/><rect x="46.6" y="8" width="6.5" height="8.5"/><rect x="54.2" y="8" width="6.5" height="8.5"/><rect x="61.8" y="8" width="6.5" height="8.5"/><rect x="69.4" y="8" width="6.5" height="8.5"/>
<rect x="39" y="18.5" width="6.5" height="8.5"/><rect x="46.6" y="18.5" width="6.5" height="8.5"/><rect x="54.2" y="18.5" width="6.5" height="8.5"/><rect x="61.8" y="18.5" width="6.5" height="8.5"/><rect x="69.4" y="18.5" width="6.5" height="8.5"/>
<rect x="54" y="27" width="7.5" height="8.6"/></g>
<rect x="80" y="13" width="4.5" height="5" fill="#8a3aa0"/><rect x="87" y="13" width="4.5" height="5" fill="#e8702a"/><rect x="80" y="21" width="4.5" height="5" fill="#3aa040"/><rect x="87" y="21" width="4.5" height="5" fill="#2050b8"/>
<rect x="94" y="0.5" width="9.5" height="31" fill="#e06a2a"/>
<rect x="19" y="60" width="15" height="17.6" fill="#b49464"/>
<rect x="36" y="33" width="6" height="40" fill="#3a3a3a" opacity=".5"/>
<rect x="50" y="38" width="9" height="8" fill="#4a80c0"/>
<path d="M34,55 L79,55 L80,67 L36,67Z" fill="#4c4238"/><rect x="44" y="67" width="34" height="10.6" fill="#c49a60"/><rect x="52" y="69" width="22" height="8.6" fill="#2a2a30"/>
<path d="M55,47 L64,37 L72,38 L78,45 L86,40 L94,39 L103.5,44 L103.5,77.6 L82,77.6 L78,66 L70,60 L58,56Z" fill="#1e1e2a"/>
<ellipse cx="72" cy="42" rx="4" ry="4.5" fill="#4a3020"/><ellipse cx="87" cy="48" rx="4.5" ry="5" fill="#4a3020"/>
<path d="M72,55 L80,50 L78,60Z" fill="#c0d0e8"/><path d="M86,56 L93,52 L90,62Z" fill="#c0d0e8"/>
<path d="M0,14 L10,12 L17,20 L21,48 L19,77.6 L0,77.6Z" fill="#1e1616"/>
<ellipse cx="9" cy="13" rx="5.5" ry="8" fill="#4a3024"/><path d="M10,20 L14,21 L15,34 L12,30Z" fill="#e8e8e8"/><path d="M11.5,23 L14,23 L14.5,33 L12.5,30Z" fill="#a82020"/>
<ellipse cx="20" cy="42" rx="4" ry="3" fill="#5a3a2a"/>
</g></g>
<!-- photo 2 -->
<g transform="translate(907,579)" clip-path="url(#c1)"><g filter="url(#pb)">
<rect width="103.5" height="77.6" fill="#ecd8ce"/>
<rect x="0" y="25" width="35" height="12" fill="#d48898"/><rect x="1" y="27" width="32" height="8" fill="#e4ecd0"/>
<rect x="0" y="37" width="34" height="40.6" fill="#c4a484"/>
<g><rect x="1" y="40" width="4" height="15" fill="#f0f0f0"/><rect x="5" y="40" width="2.5" height="15" fill="#d83a28"/><rect x="7.5" y="40" width="2.5" height="15" fill="#3a4ab8"/><rect x="10" y="40" width="3" height="15" fill="#e8a030"/><rect x="13" y="40" width="3" height="15" fill="#2a2a40"/><rect x="16" y="40" width="3" height="15" fill="#c03030"/><rect x="19" y="43" width="10" height="12" fill="#e8e0d8"/></g>
<g><rect x="2" y="58" width="4" height="15" fill="#e8e0e0"/><rect x="6" y="58" width="4" height="15" fill="#c83a30"/><rect x="10" y="58" width="3" height="15" fill="#e8a030"/><rect x="13" y="58" width="4" height="15" fill="#2a3a60"/><rect x="17" y="58" width="5" height="15" fill="#e0d0c0"/></g>
<rect x="22" y="50" width="8" height="18" fill="#9cc4dc"/>
<rect x="56" y="5" width="17" height="12" fill="#302828"/>
<rect x="73" y="0" width="13" height="77.6" fill="#c08a60"/>
<rect x="86" y="0" width="17.5" height="77.6" fill="#f2e2e4"/>
<g fill="#58c8c8" opacity=".7"><rect x="89" y="15" width="10" height="2"/><rect x="89" y="24" width="12" height="2"/><rect x="89" y="31" width="8" height="2"/><rect x="91" y="46" width="9" height="2"/></g>
<path d="M36,33 L50,25 L62,24 L77,30 L82,52 L80,61 L74,63 L70,77.6 L40,77.6 L40,62 L33,60Z" fill="#1a1820"/>
<path d="M49,25 L56,26 L61,24 L57,40 L53,40Z" fill="#f0ecec"/><path d="M54,28 L58,28 L60,58 L57,63 L54,56Z" fill="#c82838"/>
<ellipse cx="53.5" cy="17" rx="7" ry="9.5" fill="#6a4434"/>
<ellipse cx="58" cy="56" rx="10" ry="4" fill="#6a4434"/>
<ellipse cx="71" cy="70" rx="10" ry="11" fill="#2a2020"/>
</g></g>
<!-- photo 3 -->
<g transform="translate(1021,579)" clip-path="url(#c1)"><g filter="url(#pb)">
<rect width="103.5" height="77.6" fill="#9a9488"/>
<rect x="22" y="0" width="41" height="14" fill="#2a5890"/>
<rect x="25" y="13" width="25" height="2.5" fill="#b82828"/>
<rect x="0" y="15" width="6" height="45" fill="#a07050"/>
<rect x="5" y="15" width="58" height="42" fill="#efe8e2"/>
<g fill="#70c8c0" opacity=".6"><rect x="10" y="23" width="24" height="1.5"/><rect x="10" y="30" width="30" height="1.5"/><rect x="10" y="36" width="20" height="1.5"/><rect x="10" y="43" width="26" height="1.5"/></g>
<rect x="62" y="0" width="9" height="60" fill="#2e2e2e"/>
<rect x="71" y="0" width="32.5" height="60" fill="#e8c828"/><rect x="71" y="0" width="3" height="60" fill="#e07020"/>
<g fill="#f0f0f0"><rect x="77" y="3" width="7" height="12"/><rect x="86" y="3" width="7" height="12"/><rect x="95" y="3" width="7" height="12"/><rect x="79" y="24" width="7" height="8"/><rect x="88" y="24" width="7" height="8"/><rect x="97" y="24" width="6" height="8"/><rect x="88" y="15" width="7" height="7"/></g>
<rect x="67" y="14" width="6" height="8" fill="#e8dcc8"/><circle cx="73" cy="27" r="3" fill="#f0f0f0" stroke="#333" stroke-width="1"/><rect x="70" y="34" width="8" height="9" fill="#f0f0f0"/>
<path d="M31,30 L38,27 L47,29 L53,25 L55,38 L52,40 L56,62 L32,62Z" fill="#1c1c1c"/>
<ellipse cx="41.5" cy="25" rx="3.6" ry="4.6" fill="#504030"/>
<rect x="0" y="60" width="103.5" height="18" fill="#241e1c"/><ellipse cx="18" cy="68" rx="22" ry="20" fill="#3a3028"/>
<ellipse cx="38" cy="62" rx="8" ry="13" fill="#1e2430"/><ellipse cx="37" cy="51" rx="5" ry="5" fill="#4a3a30"/>
<ellipse cx="66" cy="70" rx="20" ry="14" fill="#1a1a1a"/><ellipse cx="63" cy="50" rx="6" ry="7" fill="#2a2220"/>
<ellipse cx="97" cy="56" rx="10" ry="26" fill="#302822"/>
</g></g>
<!-- row 2 -->
<g transform="translate(792.5,682)" clip-path="url(#c2)"><g filter="url(#pb)">
<rect width="103.5" height="41" fill="#9a9080"/>
<rect x="22" y="0" width="44" height="13" fill="#2a5890"/>
<rect x="0" y="13" width="6" height="28" fill="#b07a5a"/>
<rect x="5" y="13" width="60" height="28" fill="#eedfe4"/>
<g fill="#70c8c0" opacity=".6"><rect x="10" y="21" width="20" height="1.5"/><rect x="10" y="28" width="28" height="1.5"/><rect x="10" y="34" width="18" height="1.5"/></g>
<rect x="65" y="0" width="7" height="41" fill="#3a3a3a"/>
<rect x="72" y="0" width="31.5" height="41" fill="#e8c030"/>
<g fill="#f0f0f0"><rect x="75" y="3" width="6" height="10"/><rect x="84" y="3" width="6" height="10"/><rect x="93" y="3" width="6" height="10"/><rect x="80" y="22" width="6" height="9"/><rect x="89" y="22" width="6" height="9"/><rect x="96" y="22" width="6" height="9"/></g>
<circle cx="72" cy="27" r="3" fill="#f0f0f0" stroke="#333" stroke-width="1"/><rect x="70" y="31" width="8" height="10" fill="#f0f0f0"/>
<path d="M36,29 L44,26 L52,28 L57,21 L59,32 L58,41 L36,41Z" fill="#1c1c1c"/><ellipse cx="46" cy="24" rx="3.5" ry="4" fill="#504030"/>
<ellipse cx="99" cy="40" rx="8" ry="9" fill="#3a2a22"/>
</g></g>
<g transform="translate(906.5,682)" clip-path="url(#c2)"><g filter="url(#pb)">
<rect width="103.5" height="41" fill="#b8ac98"/>
<rect x="28" y="0" width="44" height="10" fill="#2a5890"/>
<rect x="0" y="10" width="9" height="31" fill="#b8885a"/>
<rect x="8" y="10" width="65" height="31" fill="#efe8e0"/>
<g fill="#70c8c0" opacity=".6"><rect x="14" y="18" width="20" height="1.5"/><rect x="14" y="25" width="30" height="1.5"/><rect x="14" y="32" width="22" height="1.5"/></g>
<rect x="73" y="0" width="8" height="41" fill="#3a3a3a"/>
<rect x="81" y="0" width="22.5" height="41" fill="#e8c030"/>
<g fill="#f0f0f0"><rect x="84" y="3" width="6" height="10"/><rect x="93" y="3" width="6" height="10"/><rect x="88" y="22" width="6" height="9"/><rect x="96" y="22" width="6" height="9"/></g>
<circle cx="81" cy="26" r="3" fill="#f0f0f0" stroke="#333" stroke-width="1"/><rect x="79" y="30" width="8" height="11" fill="#f0f0f0"/>
<path d="M43,27 L51,24 L60,26 L64,17 L67,30 L66,41 L42,41Z" fill="#1c1c1c"/><ellipse cx="53" cy="20.5" rx="3.5" ry="4" fill="#504030"/>
<ellipse cx="98" cy="40" rx="8" ry="6" fill="#3a2a22"/>
</g></g>
<g transform="translate(1020.5,682)" clip-path="url(#c2)"><g filter="url(#pb)">
<rect width="103.5" height="41" fill="#f0dce4"/>
<rect x="0" y="0" width="103.5" height="2" fill="#c02030"/>
<rect x="95" y="2" width="8.5" height="41" fill="#2a2a2a"/><rect x="95" y="4" width="8" height="18" fill="#d8c8b8"/>
<g fill="#d05070" opacity=".5"><rect x="45" y="13" width="22" height="2"/></g>
<g fill="#70c8c0" opacity=".6"><rect x="0" y="22" width="12" height="1.5"/><rect x="8" y="35" width="20" height="1.5"/></g>
<path d="M22,40 L30,34 L40,33 L55,36 L70,31 L74,18 L79,17 L77,34 L68,41Z" fill="#1a1a22"/>
<ellipse cx="35" cy="29" rx="7" ry="8.5" fill="#3a2a20"/><ellipse cx="76" cy="15" rx="3" ry="4" fill="#3a2a20"/>
</g></g>
<rect x="787.5" y="723" width="343" height="1" fill="#fff"/>
<g font-family="Liberation Sans" font-size="12.5" fill="#111" stroke="#111" stroke-width="0.45" text-anchor="middle" letter-spacing="1.1">
<text x="845" y="673.8">P1015138</text><text x="959.2" y="673.8">P1015142</text><text x="1073" y="673.8">P1015144</text></g>
</svg>

<!-- slider -->
<div class="a" style="left:854.5px;top:735.5px;width:20px;height:8px;background:#fff;border-radius:3px;box-shadow:0 0 1.5px rgba(0,0,0,.35)"></div>
<div class="a" style="left:857px;top:737.5px;width:15px;height:3.5px;background:repeating-linear-gradient(90deg,#333 0 3px,transparent 3px 4px)"></div>
<div class="a" style="left:889px;top:737.5px;width:146px;height:6px;border-radius:3px;background:linear-gradient(#8c8c8c,#c8c8c8);box-shadow:inset 0 1px 1px rgba(0,0,0,.3),0 1px 0 rgba(255,255,255,.6)"></div>
<div class="a" style="left:956px;top:733px;width:13.5px;height:13.5px;border-radius:50%;border:1px solid #2f50b8;background:radial-gradient(circle at 50% 70%,#d8f4ff,#68a8f0 45%,#2a62d8 80%)"></div>
<div class="a" style="left:1049px;top:733.5px;width:15px;height:11px;background:#fff;border-radius:2px;box-shadow:0 0 1.5px rgba(0,0,0,.35)"></div>
<div class="a" style="left:1051px;top:735.5px;width:11px;height:7px;background:#333"></div>
<!-- segmented -->
<div class="a" style="left:839px;top:755px;width:253px;height:31px;border-radius:0 0 9px 9px;border:1px solid #909090;border-top-color:#b0b0b0;box-shadow:0 1.5px 2px rgba(0,0,0,.25);overflow:hidden">
 <div class="a" style="left:0;top:0;width:83px;height:29px;background:linear-gradient(#c4c4c4,#d2d2d2 20%,#b4b4b4 60%,#9a9a9a)"></div>
 <div class="a" style="left:83px;top:0;width:1px;height:29px;background:#9c9c9c"></div>
 <div class="a" style="left:84px;top:0;width:84px;height:29px;background:linear-gradient(#f4f4f4,#e8e8e8 50%,#d8d8d8 55%,#c6c6c6)"></div>
 <div class="a" style="left:168px;top:0;width:1px;height:29px;background:#a8a8a8"></div>
 <div class="a" style="left:169px;top:0;width:84px;height:29px;background:linear-gradient(#f4f4f4,#e8e8e8 50%,#d8d8d8 55%,#c6c6c6)"></div>
</div>
<svg class="a" style="left:845px;top:757px" width="240" height="28" viewBox="845 757 240 28">
<rect x="851" y="762" width="14" height="13" fill="#fff" transform="rotate(-8 858 768)"/><rect x="852.5" y="763.5" width="11" height="10" fill="#e89018" transform="rotate(-8 858 768)"/>
<rect x="856" y="769" width="12.5" height="9.5" rx="1" fill="#c8d4e0" stroke="#6a7a90" stroke-width=".8"/><circle cx="862.3" cy="773.8" r="2.3" fill="#fff" stroke="#456" stroke-width=".8"/>
<rect x="938.5" y="762.5" width="14" height="15" fill="#3a78e0"/><path d="M945,762.5 Q943,768 946,772 L945,777.5" stroke="#123" stroke-width="1" fill="none"/><rect x="946" y="762.5" width="6.5" height="15" fill="#8fc0f8" opacity=".7"/>
<path d="M1024,770 L1031,764" stroke="#555" stroke-width="3.6" stroke-linecap="round"/><path d="M1025.5,770.5 Q1023,775 1026,779" stroke="#999" stroke-width="1" fill="none"/><ellipse cx="1027" cy="779.5" rx="3.5" ry="1.3" fill="#bbb"/>
</svg>
<div class="a" style="left:878.5px;top:764px;font-size:12px;line-height:15px;color:#2a2a2a;white-space:nowrap;letter-spacing:0.25px">iPhoto</div>
<div class="a" style="left:962px;top:764px;font-size:12px;line-height:15px;color:#2a2a2a;white-space:nowrap;letter-spacing:0.25px">Finder</div>
<div class="a" style="left:1038px;top:764px;font-size:12px;line-height:15px;color:#2a2a2a;white-space:nowrap;letter-spacing:0.25px">Capture</div>


<svg class="a" style="left:385.3px;top:307.9px" width="84" height="84" viewBox="-42 -42 84 84">
<defs><linearGradient id="boA" x1="0" y1="0" x2="1" y2="0"><stop offset="0" stop-color="#8e8f92"/><stop offset=".5" stop-color="#a9aaad"/><stop offset="1" stop-color="#c0c1c3"/></linearGradient>
<linearGradient id="biA" x1="0" y1="0" x2="1" y2="0"><stop offset="0" stop-color="#c4c5c7"/><stop offset=".55" stop-color="#adaeb1"/><stop offset="1" stop-color="#8d8e92"/></linearGradient></defs>
<circle cx="0" cy="0" r="38.8" fill="url(#boA)" stroke="#000" stroke-width="2.4"/>
<circle cx="0" cy="0" r="31.5" fill="url(#biA)"/>
<text x="0" y="15" text-anchor="middle" font-family="Liberation Sans" font-weight="bold" font-size="48" fill="#f57300" stroke="#000" stroke-width="4.6" transform="scale(1.07,1)" paint-order="stroke" stroke-linejoin="miter">A</text>
</svg><svg class="a" style="left:-14.5px;top:198.4px" width="84" height="84" viewBox="-42 -42 84 84">
<defs><linearGradient id="boB" x1="0" y1="0" x2="1" y2="0"><stop offset="0" stop-color="#8e8f92"/><stop offset=".5" stop-color="#a9aaad"/><stop offset="1" stop-color="#c0c1c3"/></linearGradient>
<linearGradient id="biB" x1="0" y1="0" x2="1" y2="0"><stop offset="0" stop-color="#c4c5c7"/><stop offset=".55" stop-color="#adaeb1"/><stop offset="1" stop-color="#8d8e92"/></linearGradient></defs>
<circle cx="0" cy="0" r="38.8" fill="url(#boB)" stroke="#000" stroke-width="2.4"/>
<circle cx="0" cy="0" r="31.5" fill="url(#biB)"/>
<text x="1.4" y="15" text-anchor="middle" font-family="Liberation Sans" font-weight="bold" font-size="48" fill="#f57300" stroke="#000" stroke-width="4.6" transform="scale(1.07,1)" paint-order="stroke" stroke-linejoin="miter">B</text>
</svg><svg class="a" style="left:400.8px;top:698.5px" width="84" height="84" viewBox="-42 -42 84 84">
<defs><linearGradient id="boC" x1="0" y1="0" x2="1" y2="0"><stop offset="0" stop-color="#8e8f92"/><stop offset=".5" stop-color="#a9aaad"/><stop offset="1" stop-color="#c0c1c3"/></linearGradient>
<linearGradient id="biC" x1="0" y1="0" x2="1" y2="0"><stop offset="0" stop-color="#c4c5c7"/><stop offset=".55" stop-color="#adaeb1"/><stop offset="1" stop-color="#8d8e92"/></linearGradient></defs>
<circle cx="0" cy="0" r="38.8" fill="url(#boC)" stroke="#000" stroke-width="2.4"/>
<circle cx="0" cy="0" r="31.5" fill="url(#biC)"/>
<text x="0" y="15" text-anchor="middle" font-family="Liberation Sans" font-weight="bold" font-size="48" fill="#f57300" stroke="#000" stroke-width="4.6" transform="scale(1.07,1)" paint-order="stroke" stroke-linejoin="miter">C</text>
</svg><svg class="a" style="left:920.6px;top:452px" width="84" height="84" viewBox="-42 -42 84 84">
<defs><linearGradient id="boD" x1="0" y1="0" x2="1" y2="0"><stop offset="0" stop-color="#8e8f92"/><stop offset=".5" stop-color="#a9aaad"/><stop offset="1" stop-color="#c0c1c3"/></linearGradient>
<linearGradient id="biD" x1="0" y1="0" x2="1" y2="0"><stop offset="0" stop-color="#c4c5c7"/><stop offset=".55" stop-color="#adaeb1"/><stop offset="1" stop-color="#8d8e92"/></linearGradient></defs>
<circle cx="0" cy="0" r="38.8" fill="url(#boD)" stroke="#000" stroke-width="2.4"/>
<circle cx="0" cy="0" r="31.5" fill="url(#biD)"/>
<text x="0" y="15" text-anchor="middle" font-family="Liberation Sans" font-weight="bold" font-size="48" fill="#f57300" stroke="#000" stroke-width="4.6" transform="scale(1.07,1)" paint-order="stroke" stroke-linejoin="miter">D</text>
</svg>
<div class="a" style="left:1161px;top:2px;width:1px;height:86px;background:rgba(255,255,255,.3)"></div>
<div class="a" style="left:1161px;top:89px;width:1px;height:713px;background:#f6f6f6"></div>
<svg class="a" style="left:1150px;top:790px" width="12" height="12" viewBox="1150 790 12 12"><g stroke="#777" stroke-width="1" fill="none"><path d="M1152,802 Q1152,795 1162,793"/><path d="M1156,802 Q1157,798 1162,797"/></g></svg>
</body></html>
